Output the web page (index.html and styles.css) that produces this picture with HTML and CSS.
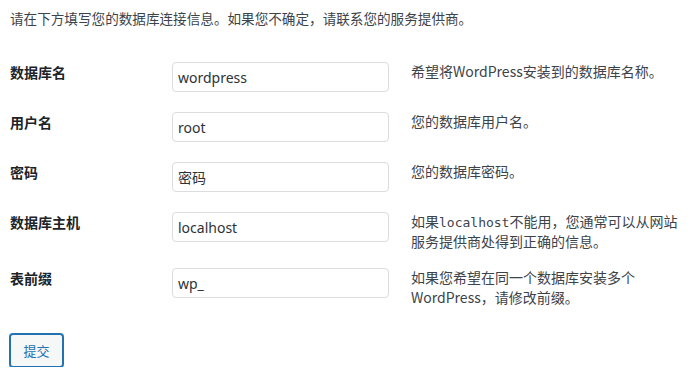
FILE: index.html
```html
<!DOCTYPE html>
<html lang="zh-CN">
<head>
    <meta charset="UTF-8">
    <title>WordPress › 安装配置文件</title>
    <link rel="stylesheet" href="styles.css">
</head>
<body>
    <form class="setup" method="post" action="#">
        <p class="intro">请在下方填写您的数据库连接信息。如果您不确定，请联系您的服务提供商。</p>

        <table class="form-table">
            <tr>
                <th>数据库名</th>
                <td class="field"><input type="text" value="wordpress"></td>
                <td class="desc">希望将WordPress安装到的数据库名称。</td>
            </tr>
            <tr>
                <th>用户名</th>
                <td class="field"><input type="text" value="root"></td>
                <td class="desc">您的数据库用户名。</td>
            </tr>
            <tr>
                <th>密码</th>
                <td class="field"><input type="text" value="密码"></td>
                <td class="desc">您的数据库密码。</td>
            </tr>
            <tr>
                <th>数据库主机</th>
                <td class="field"><input type="text" value="localhost"></td>
                <td class="desc">如果<code>localhost</code>不能用，您通常可以从网站服务提供商处得到正确的信息。</td>
            </tr>
            <tr>
                <th>表前缀</th>
                <td class="field"><input type="text" value="wp_"></td>
                <td class="desc">如果您希望在同一个数据库安装多个WordPress，请修改前缀。</td>
            </tr>
        </table>

        <p class="step"><button type="submit" class="button">提交</button></p>
    </form>
</body>
</html>
```

FILE: styles.css
```css
body {
    margin: 0;
    padding: 0 10px;
    background: #fff;
    color: #3c434a;
    font-family: "Noto Sans CJK SC", "Noto Sans", sans-serif;
    font-size: 14px;
}
.intro {
    margin: 8px 0 0;
    font-size: 13.6px;
    line-height: 20px;
}
.form-table {
    border-collapse: collapse;
    margin-top: 24px;
}
.form-table th {
    width: 162px;
    padding: 10px 0 0;
    text-align: left;
    vertical-align: top;
    font-size: 14px;
    font-weight: bold;
    color: #1d2327;
    line-height: 20px;
}
.form-table td {
    vertical-align: top;
    padding: 0;
}
.form-table .field {
    padding: 10px 0;
}
.form-table .desc {
    width: 270px;
    padding: 9px 0 7px 22px;
    line-height: 20px;
}
.form-table input {
    box-sizing: border-box;
    width: 217px;
    height: 30px;
    margin: 0;
    padding: 0 5px;
    border: 1px solid #dcdcde;
    border-radius: 4px;
    font-family: "Noto Sans", "Noto Sans CJK SC", sans-serif;
    font-size: 14px;
    color: #2c3338;
}
code {
    font-family: "DejaVu Sans Mono", monospace;
    font-size: 13px;
    line-height: 1;
}
.step {
    margin: 20px 0 0;
}
.button {
    display: block;
    box-sizing: border-box;
    width: 53px;
    height: 33px;
    padding: 0;
    border: 1px solid #2271b1;
    border-radius: 3px;
    box-shadow: 0 0 0 1px #2271b1;
    background: #f6f7f7;
    color: #2271b1;
    font-family: "Noto Sans CJK SC", sans-serif;
    font-size: 13px;
}
```
